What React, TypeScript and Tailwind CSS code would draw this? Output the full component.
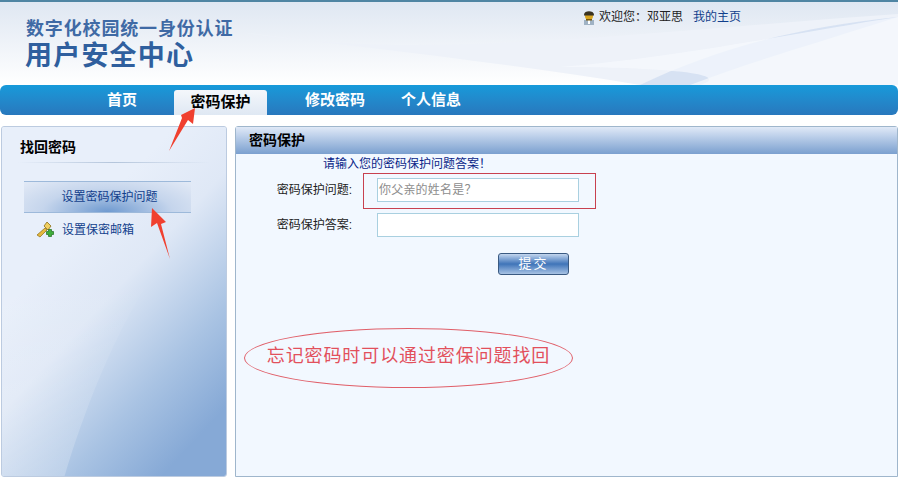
const cjk = "font-['Liberation_Sans','Noto_Sans_CJK_SC',sans-serif]";

function RedArrow({ className, points }: { className: string; points: string }) {
  return (
    <svg className={className} viewBox="0 0 40 70" width="40" height="70">
      <polygon points={points} fill="#f0402f" />
    </svg>
  );
}

function UserIcon() {
  return (
    <svg width="12" height="15" viewBox="0 0 12 15">
      <rect x="1" y="10" width="10" height="5" fill="#9fb2c4" />
      <rect x="5" y="10" width="2" height="4" fill="#fff" />
      <circle cx="6" cy="6" r="4" fill="#d9a520" />
      <path d="M1 4.5 C1 0 11 0 11 4.5 L11 5.5 L1 5.5 Z" fill="#3a3320" />
      <rect x="3" y="9" width="6" height="1.5" fill="#7a5a10" />
    </svg>
  );
}

function KeyIcon() {
  return (
    <svg width="18" height="18" viewBox="0 0 18 18">
      <path d="M1 14 L9 7 L11 9 L4 16 Z" fill="#e6b93c" stroke="#8c6d16" strokeWidth="0.7" />
      <path d="M8 5 L11 1 L15 5 L12 9 Z" fill="#f2d060" stroke="#8c6d16" strokeWidth="0.8" />
      <path d="M12 9 h2 v-2 h3 v2 h2 v3 h-2 v2 h-3 v-2 h-2 Z" transform="translate(-1.5 1.5)" fill="#3fae3a" stroke="#1f6d1c" strokeWidth="0.7" />
    </svg>
  );
}

function NavItem({ label, className }: { label: string; className: string }) {
  return <a className={`text-[15px] font-bold text-white ${className}`}>{label}</a>;
}

function FormRow({ label, value }: { label: string; value?: string }) {
  return (
    <div className="flex items-center">
      <label className="w-[116px] text-right text-[12px] text-[#222]">{label}</label>
      <div className="ml-[25px] flex h-[24px] w-[202px] items-center border border-[#a9d0e0] bg-white pl-[1px] text-[12px] tracking-[0.2px] text-[#8d8d8d]">
        {value}
      </div>
    </div>
  );
}

export default function App() {
  return (
    <div className={`relative h-[481px] w-[898px] overflow-hidden bg-white ${cjk}`}>
      <header className="relative h-[85px] border-t-2 border-[#4f85a3] bg-gradient-to-b from-[#dfe7f2] to-white">
        <svg className="absolute inset-0" width="898" height="83" viewBox="0 0 898 83">
          <path d="M240 30 C420 60 640 30 898 12 L898 83 L640 83 C500 60 360 45 240 30 Z" fill="#eef2f9" />
          <path d="M640 83 C720 45 800 25 898 15 C820 40 750 60 690 83 Z" fill="#cfdcf0" opacity="0.75" />
          <path d="M560 65 C680 55 800 30 898 15 L898 83 L700 83 C740 70 640 65 560 65 Z" fill="#f7f9fd" opacity="0.7" />
        </svg>
        <div className="relative pl-[26px] pt-[17px]">
          <p className="text-[18px] leading-[20px] font-bold tracking-[0.85px] text-[#3f6aa5]">数字化校园统一身份认证</p>
          <p className="mt-[2px] -ml-px text-[27px] leading-[30px] font-bold tracking-[1.2px] text-[#2f5f9e]">用户安全中心</p>
        </div>
        <div className="absolute left-[583px] top-[6px] flex items-center text-[12px] text-[#222]">
          <UserIcon />
          <span className="ml-[4px]">欢迎您：邓亚思</span>
          <a className="ml-[10px] text-[#123f8c]">我的主页</a>
        </div>
      </header>

      <nav className="flex h-[30px] items-center rounded-[6px] bg-gradient-to-b from-[#169ada] to-[#2878bd] pl-[107px]">
        <NavItem label="首页" className="" />
        <div className="ml-[37px] mt-[5px] flex h-[25px] w-[93px] items-center justify-center rounded-t-[3px] bg-gradient-to-b from-[#f4f7fb] to-[#dfe8f3] text-[15px] font-bold text-black">
          密码保护
        </div>
        <NavItem label="修改密码" className="ml-[38px]" />
        <NavItem label="个人信息" className="ml-[36px]" />
      </nav>

      <div className="mt-[11px] flex h-[352px] gap-[8px] pl-[1px]">
        <aside className="relative h-[351px] w-[226px] overflow-hidden rounded-[3px] border border-[#bccbe0] bg-[#e6eefa]">
          <svg className="absolute inset-0" width="226" height="351" viewBox="0 0 226 351">
            <defs>
              <linearGradient id="sideBg" x1="0.25" y1="0.35" x2="0.7" y2="1">
                <stop offset="0" stopColor="#e8effa" />
                <stop offset="0.3" stopColor="#dfe8f6" />
                <stop offset="0.7" stopColor="#a9c3e3" />
                <stop offset="1" stopColor="#86a9d6" />
              </linearGradient>
              <linearGradient id="sideGlass" x1="0" y1="0" x2="0" y2="1">
                <stop offset="0" stopColor="#ffffff" stopOpacity="0" />
                <stop offset="1" stopColor="#ffffff" stopOpacity="0.22" />
              </linearGradient>
            </defs>
            <rect width="226" height="351" fill="url(#sideBg)" />
            <path d="M0 351 L0 150 L150 150 C110 210 80 290 62 351 Z" fill="url(#sideGlass)" />
          </svg>
          <div className="relative">
            <h2 className="ml-[18px] pt-[10px] text-[14px] leading-[20px] font-bold text-black">找回密码</h2>
            <div className="mx-[16px] mt-[5px] h-px bg-gradient-to-r from-transparent via-[#b4c5db] to-transparent" />
            <a className="ml-[22px] mt-[18px] flex h-[32px] w-[167px] items-center justify-center border-y border-[#9db9da] bg-[radial-gradient(ellipse_at_50%_100%,#6f9ad0_0%,#c5d5ec_55%,#e3eaf6_100%)] pl-[4px] text-[12px] text-[#123f8c]">
              设置密码保护问题
            </a>
            <a className="ml-[34px] mt-[8px] flex h-[18px] items-center text-[12px] text-[#123f8c]">
              <KeyIcon />
              <span className="ml-[8px]">设置保密邮箱</span>
            </a>
          </div>
        </aside>

        <main className="h-[351px] flex-1 rounded-t-[3px] border border-[#9fb6cc] bg-[#f2f8ff]">
          <h2 className="flex h-[27px] items-center bg-gradient-to-b from-[#e0e9f7] to-[#7ba0cf] pl-[13px] text-[14px] font-bold text-black">密码保护</h2>
          <p className="ml-[87px] mt-[3px] text-[12px] leading-[14px] text-[#0a1f88]">请输入您的密码保护问题答案！</p>
          <div className="mt-[7px] flex flex-col gap-[11px]">
            <FormRow label="密码保护问题:" value="你父亲的姓名是？" />
            <FormRow label="密码保护答案:" />
          </div>
          <button className="ml-[262px] mt-[16px] flex h-[22px] w-[71px] items-center justify-center rounded-[3px] border border-[#3a5a82] bg-gradient-to-b from-[#c3d6ee] via-[#3f74b8] to-[#a8c3e4] text-[13px] tracking-[2px] text-white">
            提交
          </button>
        </main>
      </div>

      {/* annotations drawn over the page */}
      <RedArrow className="absolute left-[160px] top-[100px]" points="35,8 33,24 28,20 9,51 22,18 21,15" />
      <RedArrow className="absolute left-[145px] top-[200px]" points="7,8 21,22 16,24 25,59 12,23 6,27" />
      <div className="absolute left-[363px] top-[173px] h-[36px] w-[233px] border border-[#c8414f]" />
      <div className="absolute left-[244px] top-[328px] flex h-[60px] w-[329px] items-center justify-center rounded-[50%] border border-[#e0606a]">
        <span className="-mt-[4px] text-[18px] tracking-[0.9px] text-[#e2505c]">忘记密码时可以通过密保问题找回</span>
      </div>
    </div>
  );
}
